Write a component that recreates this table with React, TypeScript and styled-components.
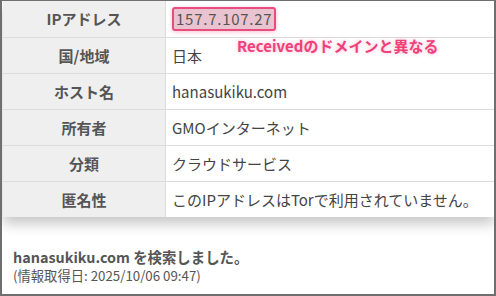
import styled, { createGlobalStyle } from 'styled-components';

const GlobalStyle = createGlobalStyle`
    html, body {
        margin: 0;
        padding: 0;
        background: #ffffff;
    }
    body {
        font-family: 'Noto Sans CJK JP', 'Noto Sans', sans-serif;
        color: #444444;
    }
`;

const Frame = styled.div`
    width: 496px;
    height: 296px;
    box-sizing: border-box;
    border: 2px solid #6f6f6f;
    border-top-width: 1px;
    background: #ffffff;
    display: flex;
    flex-direction: column;
    overflow: hidden;
`;

const InfoTable = styled.table`
    width: calc(100% - 1px);
    margin-left: 1px;
    border-collapse: collapse;
    box-shadow: 0 7px 12px rgba(0, 0, 0, 0.22);
    font-size: 15px;
`;

const Row = styled.tr`
    height: 36px;
    & + & > * {
        border-top: 1px solid #dcdcdc;
    }
`;

const Label = styled.th`
    width: 162px;
    background: #efefef;
    color: #555555;
    font-weight: 700;
    text-align: center;
    padding: 0;
    border-right: 1px solid #dcdcdc;
`;

const Value = styled.td`
    position: relative;
    padding: 0 0 0 6px;
    color: #444444;
    white-space: nowrap;
`;

const Highlight = styled.span`
    display: inline-block;
    padding: 0 2px;
    line-height: 20px;
    letter-spacing: 0.75px;
    background: #e9c3cf;
    border: 2px solid #e84d7e;
    border-radius: 3px;
    color: #555555;
    box-shadow: 0 1px 4px rgba(232, 77, 126, 0.35);
`;

const Note = styled.span`
    position: absolute;
    left: 71px;
    top: 34px;
    color: #f0407a;
    font-weight: 700;
    font-size: 15px;
    text-shadow: 0 0 4px rgba(240, 64, 122, 0.35);
    white-space: nowrap;
    z-index: 1;
`;

const Footer = styled.div`
    padding: 30px 0 0 11px;
`;

const Searched = styled.div`
    font-size: 14.4px;
    font-weight: 700;
    color: #555555;
    line-height: 19px;
`;

const Fetched = styled.div`
    font-size: 13.3px;
    color: #555555;
    line-height: 20px;
`;

const ROWS = [
    { label: '国/地域', value: '日本' },
    { label: 'ホスト名', value: 'hanasukiku.com' },
    { label: '所有者', value: 'GMOインターネット' },
    { label: '分類', value: 'クラウドサービス' },
    { label: '匿名性', value: 'このIPアドレスはTorで利用されていません。' },
];

export default function App() {
    return (
        <>
            <GlobalStyle />
            <Frame>
                <InfoTable>
                    <tbody>
                        <Row>
                            <Label>IPアドレス</Label>
                            <Value>
                                <Highlight>157.7.107.27</Highlight>
                                <Note>Receivedのドメインと異なる</Note>
                            </Value>
                        </Row>
                        {ROWS.map((r) => (
                            <Row key={r.label}>
                                <Label>{r.label}</Label>
                                <Value>{r.value}</Value>
                            </Row>
                        ))}
                    </tbody>
                </InfoTable>
                <Footer>
                    <Searched>hanasukiku.com を検索しました。</Searched>
                    <Fetched>(情報取得日: 2025/10/06 09:47)</Fetched>
                </Footer>
            </Frame>
        </>
    );
}
